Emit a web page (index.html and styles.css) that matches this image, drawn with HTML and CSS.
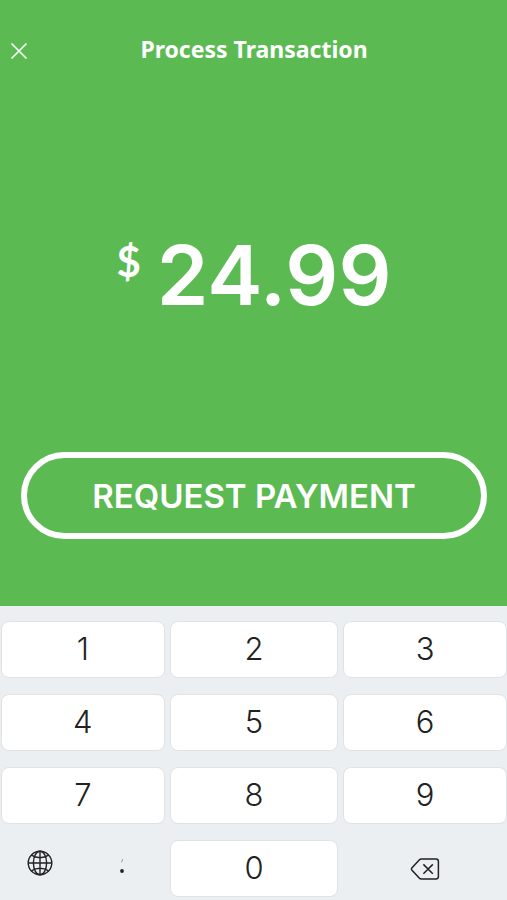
FILE: index.html
```html
<!DOCTYPE html>
<html lang="en">
<head>
<meta charset="utf-8">
<meta name="viewport" content="width=device-width, initial-scale=1">
<title>Process Transaction</title>
<link rel="stylesheet" href="styles.css">
</head>
<body>
<main class="payment">
  <header class="header">
    <button class="close" type="button" aria-label="Close">
      <svg width="18" height="18" viewBox="0 0 18 18"><path d="M1.5 1.5 16.5 16.5M16.5 1.5 1.5 16.5"/></svg>
    </button>
    <h1 class="title">Process Transaction</h1>
  </header>
  <p class="amount"><span class="currency">$</span><span class="value">24.99</span></p>
  <button class="request" type="button">REQUEST PAYMENT</button>
</main>
<section class="keypad" aria-label="Keypad">
  <button class="key" type="button">1</button>
  <button class="key" type="button">2</button>
  <button class="key" type="button">3</button>
  <button class="key" type="button">4</button>
  <button class="key" type="button">5</button>
  <button class="key" type="button">6</button>
  <button class="key" type="button">7</button>
  <button class="key" type="button">8</button>
  <button class="key" type="button">9</button>
  <div class="extras">
    <button class="tool globe" type="button" aria-label="Switch keyboard">
      <svg width="26" height="26" viewBox="0 0 26 26"><circle cx="13" cy="13" r="11.8"/><ellipse cx="13" cy="13" rx="6.6" ry="11.8"/><path d="M13 1.2v23.6M1.2 13h23.6M4.2 5.2Q13 10.2 21.8 5.2M4.2 20.8Q13 15.8 21.8 20.8"/></svg>
    </button>
    <button class="tool" type="button" aria-label="Decimal point">
      <svg width="8" height="18" viewBox="0 0 8 18"><path class="tick" d="M4.6-.8 3.6 2.2"/><circle class="dot" cx="4" cy="11" r="1.9"/></svg>
    </button>
  </div>
  <button class="key" type="button">0</button>
  <button class="tool" type="button" aria-label="Delete">
    <svg class="delete" width="30" height="24" viewBox="0 0 30 24"><path d="M11.4 2H26q2.4 0 2.4 2.4v15.2q0 2.4-2.4 2.4H11.4q-1.3 0-2.2-1L1.8 13q-.8-1 0-2L9.2 3q.9-1 2.2-1ZM13.4 7.4l9.4 9.4M22.8 7.4l-9.4 9.4"/></svg>
  </button>
</section>
</body>
</html>
```
FILE: styles.css
```css
* {
  box-sizing: border-box;
}

body {
  margin: 0;
  min-height: 100vh;
  display: flex;
  flex-direction: column;
  background: #ebeff2;
  font-family: Inter, "Liberation Sans", sans-serif;
}

button {
  padding: 0;
  border: 0;
  background: none;
  color: inherit;
  font: inherit;
  cursor: pointer;
}

svg {
  display: block;
  overflow: visible;
  fill: none;
  stroke: currentColor;
}

.payment {
  flex: 1;
  display: flex;
  flex-direction: column;
  padding: 33px 20px 67px 21px;
  background: #5cba53;
  color: #fff;
}

.header {
  display: grid;
  grid-template-columns: 18px 1fr 18px;
  align-items: center;
  margin: 0 -11px;
}

.close {
  padding-top: 4px;
}

.close svg {
  stroke-width: 1.6;
}

.title {
  margin: 0;
  font: 700 23px/32px "Noto Sans", sans-serif;
  text-align: center;
}

.amount {
  flex: 1;
  display: flex;
  justify-content: center;
  align-items: center;
  gap: 16px;
  margin: 0;
  padding-top: 32px;
  font-weight: 600;
}

.currency {
  font: 700 42px/48px Lato, sans-serif;
  padding-bottom: 28px;
}

.value {
  font-size: 83px;
  line-height: 96px;
}

.request {
  height: 87px;
  border: 6px solid #fff;
  border-radius: 44px;
  font-size: 33px;
  font-weight: 600;
}

.keypad {
  display: grid;
  grid-template-columns: 33fr 34fr 33fr;
  grid-auto-rows: 57px;
  gap: 16px 5px;
  padding: 15px 0 3px 1px;
  color: #222;
}

.key {
  padding-bottom: 3px;
  border: 1px solid #dfe3e6;
  border-radius: 8px;
  background: #fff;
  font-size: 31px;
  font-weight: 300;
}

.extras {
  display: grid;
  grid-template-columns: 78px 1fr;
}

.tool {
  display: flex;
  justify-content: center;
  align-items: center;
}

.globe {
  padding-bottom: 12px;
}

.globe svg {
  stroke-width: 1.4;
}

.delete {
  stroke-width: 1.5;
}

.tick {
  stroke: #999;
}

.dot {
  fill: #222;
  stroke: none;
}
```
